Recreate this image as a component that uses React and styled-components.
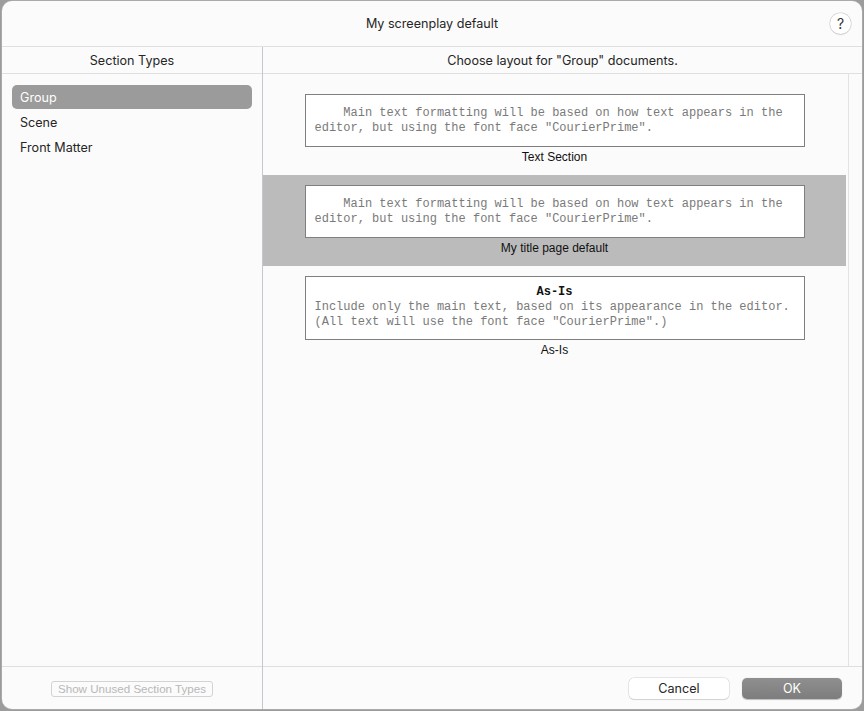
import React from "react";
import styled, { createGlobalStyle } from "styled-components";

const Global = createGlobalStyle`
  html, body { margin: 0; padding: 0; background: #9c9c9c; }
  body { font-family: Inter, "Liberation Sans", sans-serif; }
  #root { width: 864px; height: 711px; display: flex; }
`;

const Window = styled.div`
  margin: 1px 2px 2px 2px;
  flex: 1;
  background: #fbfbfb;
  border-radius: 10px;
  overflow: hidden;
  display: flex;
  flex-direction: column;
  box-shadow: 0 0 0 0.5px #b8b8b8;
`;

const TitleBar = styled.div`
  height: 45px;
  flex: none;
  display: flex;
  align-items: center;
  justify-content: center;
  position: relative;
  border-bottom: 1px solid #e0e0e0;
  font-size: 12.6px;
  color: #262626;
`;

const HelpButton = styled.div`
  position: absolute;
  right: 11px;
  top: 12px;
  width: 21px;
  height: 21px;
  border-radius: 50%;
  background: #fff;
  box-shadow: 0 0 0 0.5px #c8c8c8, 0 1px 1px rgba(0,0,0,0.15);
  display: flex;
  align-items: center;
  justify-content: center;
  font-size: 14px;
  color: #333;
`;

const Body = styled.div`
  flex: 1;
  display: grid;
  grid-template-columns: 260px 1fr;
  min-height: 0;
`;

const Column = styled.div`
  display: flex;
  flex-direction: column;
  min-height: 0;
  border-left: ${(p) => (p.$divider ? "1px solid #c3c8cf" : "none")};
`;

const ColHeader = styled.div`
  height: 26px;
  flex: none;
  display: flex;
  align-items: center;
  justify-content: center;
  border-bottom: 1px solid #e0e0e0;
  font-size: 12.6px;
  color: #262626;
`;

const SideList = styled.div`
  flex: 1;
  padding: 11px 10px;
  display: flex;
  flex-direction: column;
`;

const SideRow = styled.div`
  height: 24px;
  margin-bottom: 1px;
  border-radius: 5px;
  display: flex;
  align-items: center;
  padding-left: 8px;
  font-size: 12.6px;
  color: ${(p) => (p.$selected ? "#fff" : "#262626")};
  background: ${(p) => (p.$selected ? "#9b9b9b" : "transparent")};
`;

const Footer = styled.div`
  height: 42px;
  flex: none;
  border-top: 1px solid #dedede;
  display: flex;
  align-items: center;
  justify-content: ${(p) => p.$justify || "center"};
  gap: 13px;
  padding-right: ${(p) => (p.$justify ? "20px" : "0")};
`;

const SmallButton = styled.div`
  height: 14px;
  padding: 0 6px;
  border: 1px solid #d3d3d3;
  border-radius: 3px;
  font-family: "Liberation Sans", Arial, sans-serif;
  font-size: 11.6px;
  color: #b8b8b8;
  display: flex;
  align-items: center;
  margin-top: 1px;
`;

const PushButton = styled.div`
  width: 100px;
  height: 21px;
  border-radius: 5px;
  display: flex;
  align-items: center;
  justify-content: center;
  font-size: 12.6px;
  color: ${(p) => (p.$primary ? "#fff" : "#262626")};
  background: ${(p) =>
    p.$primary ? "linear-gradient(#8f8f8f, #7d7d7d)" : "#fff"};
  box-shadow: ${(p) =>
    p.$primary
      ? "0 0.5px 1px rgba(0,0,0,0.25)"
      : "0 0 0 0.5px #cfcfcf, 0 1px 1px rgba(0,0,0,0.15)"};
`;

const Pane = styled.div`
  flex: 1;
  display: grid;
  grid-template-columns: 1fr 14px;
  min-height: 0;
`;

const LayoutList = styled.div`
  padding-top: 10px;
  padding-right: 2px;
  display: flex;
  flex-direction: column;
`;

const ScrollTrack = styled.div`
  border-left: 1px solid #e2e2e2;
`;

const LayoutItem = styled.div`
  padding-top: 10px;
  height: 91px;
  box-sizing: border-box;
  display: flex;
  flex-direction: column;
  align-items: center;
  background: ${(p) => (p.$selected ? "#bbbbbb" : "transparent")};
`;

const Preview = styled.div`
  width: 500px;
  box-sizing: border-box;
  background: #fff;
  border: 1px solid #7f7f7f;
  padding: ${(p) => p.$pad || "11px 9px 10px"};
  font-family: "Liberation Mono", "Courier New", monospace;
  font-size: 12px;
  line-height: 15px;
  color: #7a7a7a;
  white-space: pre;
`;

const PreviewTitle = styled.div`
  text-align: center;
  font-weight: bold;
  color: #111;
`;

const Label = styled.div`
  margin-top: 3px;
  font-family: "Liberation Sans", Arial, sans-serif;
  font-size: 12px;
  color: #111;
`;

const layouts = [
  {
    label: "Text Section",
    lines: [
      "    Main text formatting will be based on how text appears in the",
      'editor, but using the font face "CourierPrime".',
    ],
  },
  {
    label: "My title page default",
    selected: true,
    lines: [
      "    Main text formatting will be based on how text appears in the",
      'editor, but using the font face "CourierPrime".',
    ],
  },
  {
    label: "As-Is",
    title: "As-Is",
    pad: "8px 9px 9px",
    lines: [
      "Include only the main text, based on its appearance in the editor.",
      '(All text will use the font face "CourierPrime".)',
    ],
  },
];

export default function App() {
  return (
    <>
      <Global />
      <Window>
        <TitleBar>
          My screenplay default
          <HelpButton>?</HelpButton>
        </TitleBar>
        <Body>
          <Column>
            <ColHeader>Section Types</ColHeader>
            <SideList>
              <SideRow $selected>Group</SideRow>
              <SideRow>Scene</SideRow>
              <SideRow>Front Matter</SideRow>
            </SideList>
            <Footer>
              <SmallButton>Show Unused Section Types</SmallButton>
            </Footer>
          </Column>
          <Column $divider>
            <ColHeader>Choose layout for "Group" documents.</ColHeader>
            <Pane>
              <LayoutList>
                {layouts.map((l) => (
                  <LayoutItem key={l.label} $selected={l.selected}>
                    <Preview $pad={l.pad}>
                      {l.title && <PreviewTitle>{l.title}</PreviewTitle>}
                      {l.lines.map((t, i) => (
                        <div key={i}>{t}</div>
                      ))}
                    </Preview>
                    <Label>{l.label}</Label>
                  </LayoutItem>
                ))}
              </LayoutList>
              <ScrollTrack />
            </Pane>
            <Footer $justify="flex-end">
              <PushButton>Cancel</PushButton>
              <PushButton $primary>OK</PushButton>
            </Footer>
          </Column>
        </Body>
      </Window>
    </>
  );
}
